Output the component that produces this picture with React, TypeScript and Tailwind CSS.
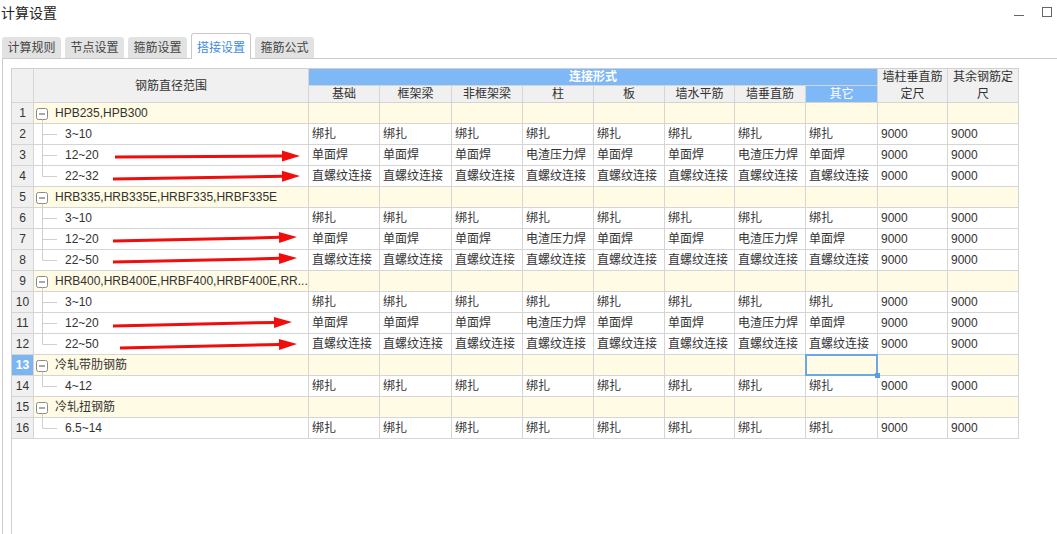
import React from 'react';

type Group = { name: string; children: string[] };

const groups: Group[] = [
  { name: 'HPB235,HPB300', children: ['3~10', '12~20', '22~32'] },
  { name: 'HRB335,HRB335E,HRBF335,HRBF335E', children: ['3~10', '12~20', '22~50'] },
  { name: 'HRB400,HRB400E,HRBF400,HRBF400E,RR...', children: ['3~10', '12~20', '22~50'] },
  { name: '冷轧带肋钢筋', children: ['4~12'] },
  { name: '冷轧扭钢筋', children: ['6.5~14'] },
];

const subHeaders = ['基础', '框架梁', '非框架梁', '柱', '板', '墙水平筋', '墙垂直筋', '其它'];

const weld = ['单面焊', '单面焊', '单面焊', '电渣压力焊', '单面焊', '单面焊', '电渣压力焊', '单面焊'];

function valuesFor(range: string) {
  if (range === '12~20') return weld;
  if (range.startsWith('22~')) return Array(8).fill('直螺纹连接');
  return Array(8).fill('绑扎');
}

const arrows = [
  [115, 157, 300, 156],
  [113, 179, 300, 176],
  [113, 241, 297, 237],
  [113, 262, 297, 258],
  [113, 326, 292, 322],
  [120, 348, 297, 344],
];

const cell = 'border-r border-b border-[#d5d5d5]';

function Tab({ label, active }: { label: string; active?: boolean }) {
  if (active) {
    return (
      <div className="relative z-10 -mb-px flex h-[26px] w-[60px] items-center justify-center rounded-t-[3px] border border-b-0 border-[#c9c9c9] bg-white pt-[3px] text-[12px] text-[#3d8be2]">
        {label}
      </div>
    );
  }
  return (
    <div className="flex h-[21px] w-[59px] items-center justify-center rounded-t-[3px] bg-[#e2e2e2] text-[12px] text-[#444]">
      {label}
    </div>
  );
}

function GroupRow({ num, name, selected }: { num: number; name: string; selected?: boolean }) {
  return (
    <>
      <div
        className={`${cell} flex items-center justify-center ${
          selected ? 'bg-[#7db5f3] font-bold text-white' : 'bg-[#f0f0f0]'
        }`}
      >
        {num}
      </div>
      <div className={`${cell} flex items-center overflow-hidden whitespace-nowrap bg-[#fffbe4]`}>
        <svg width="21" height="20" className="shrink-0">
          <rect x="2.5" y="5.5" width="11" height="11" rx="2" fill="white" stroke="#8a8a8a" />
          <line x1="5" y1="11" x2="11" y2="11" stroke="#555" />
          <line x1="8.5" y1="16.5" x2="8.5" y2="20" stroke="#cfcfcf" />
        </svg>
        <span>{name}</span>
      </div>
      {Array.from({ length: 10 }).map((_, i) => (
        <div key={i} className={`${cell} relative bg-[#fffbe4]`}>
          {selected && i === 7 && (
            <>
              <div className="absolute inset-[-1px] border-2 border-[#6aa6e8]" />
              <div className="absolute -right-[3px] -bottom-[3px] z-10 h-[5px] w-[5px] bg-[#5b9be0]" />
            </>
          )}
        </div>
      ))}
    </>
  );
}

function ChildRow({ num, range, last }: { num: number; range: string; last: boolean }) {
  const vals = valuesFor(range);
  return (
    <>
      <div className={`${cell} flex items-center justify-center bg-[#f0f0f0]`}>{num}</div>
      <div className={`${cell} flex items-center whitespace-nowrap bg-white`}>
        <svg width="31" height="20" className="shrink-0">
          <line x1="8.5" y1="0" x2="8.5" y2={last ? 10.5 : 20} stroke="#cfcfcf" />
          <line x1="8.5" y1="10.5" x2="23" y2="10.5" stroke="#cfcfcf" />
        </svg>
        <span>{range}</span>
      </div>
      {vals.map((v, i) => (
        <div key={i} className={`${cell} flex items-center whitespace-nowrap bg-white pl-[3px]`}>
          {v}
        </div>
      ))}
      <div className={`${cell} flex items-center bg-white pl-[3px]`}>9000</div>
      <div className={`${cell} flex items-center bg-white pl-[3px]`}>9000</div>
    </>
  );
}

function Arrow({ a }: { a: number[] }) {
  const [x1, y1, x2, y2] = a;
  const dx = x2 - x1;
  const dy = y2 - y1;
  const len = Math.hypot(dx, dy);
  const ux = dx / len;
  const uy = dy / len;
  const hl = 18;
  const hw = 5.5;
  const bx = x2 - ux * hl;
  const by = y2 - uy * hl;
  const p = `${x2},${y2} ${bx - uy * hw},${by + ux * hw} ${bx + uy * hw},${by - ux * hw}`;
  return (
    <g>
      <line x1={x1} y1={y1} x2={bx + ux} y2={by + uy} stroke="#f20d0d" strokeWidth="3" />
      <polygon points={p} fill="#f20d0d" />
    </g>
  );
}

export default function App() {
  let n = 0;
  const rows: React.ReactNode[] = [];
  groups.forEach((g, gi) => {
    n += 1;
    rows.push(<GroupRow key={`g${gi}`} num={n} name={g.name} selected={n === 13} />);
    g.children.forEach((c, ci) => {
      n += 1;
      rows.push(
        <ChildRow key={`c${gi}-${ci}`} num={n} range={c} last={ci === g.children.length - 1} />
      );
    });
  });

  return (
    <div className="relative flex h-[534px] w-[1057px] flex-col overflow-hidden bg-white font-['Liberation_Sans','Noto_Sans_CJK_SC',sans-serif] text-[12px] text-[#333]">
      <div className="flex h-[33px] shrink-0 items-start justify-between">
        <div className="pl-[1px] pt-[3px] text-[14px] leading-[20px] text-[#222]">计算设置</div>
        <div className="flex items-start gap-[18px] pr-[5px] pt-[7px]">
          <div className="mt-[8px] h-px w-[10px] bg-[#666]" />
          <div className="h-[10px] w-[10px] border border-[#666]" />
        </div>
      </div>

      <div className="flex h-[25px] shrink-0 items-end gap-[4px] pl-[2px]">
        <Tab label="计算规则" />
        <Tab label="节点设置" />
        <Tab label="箍筋设置" />
        <Tab label="搭接设置" active />
        <Tab label="箍筋公式" />
      </div>

      <div className="ml-[2px] flex-1 border-l border-t border-[#cbcbcb] pl-[8px] pt-[9px]">
        <div className="h-full border-l border-[#d0d0d0]">
          <div className="grid w-fit grid-cols-[22px_275px_71px_72px_71px_71px_71px_70px_71px_72px_70px_71px] grid-rows-[17px_17px_repeat(16,21px)] border-t border-[#d0d0d0]">
            <div className={`${cell} row-span-2 bg-[#f0f0f0]`} />
            <div className={`${cell} row-span-2 flex items-center justify-center bg-[#f0f0f0]`}>
              钢筋直径范围
            </div>
            <div className={`${cell} col-span-8 flex items-center justify-center bg-[#7fb8f6] font-bold text-white`}>
              连接形式
            </div>
            <div className={`${cell} row-span-2 flex items-center justify-center bg-[#f0f0f0] text-center leading-[17px]`}>
              墙柱垂直筋
              <br />
              定尺
            </div>
            <div className={`${cell} row-span-2 flex items-center justify-center bg-[#f0f0f0] text-center leading-[17px]`}>
              其余钢筋定
              <br />
              尺
            </div>
            {subHeaders.map((h) => (
              <div
                key={h}
                className={`${cell} flex items-center justify-center ${
                  h === '其它' ? 'bg-[#7fb8f6] text-white' : 'bg-[#f0f0f0]'
                }`}
              >
                {h}
              </div>
            ))}
            {rows}
          </div>
        </div>
      </div>

      <svg className="pointer-events-none absolute inset-0" width="1057" height="534" viewBox="0 0 1057 534">
        {arrows.map((a, i) => (
          <Arrow key={i} a={a} />
        ))}
      </svg>
    </div>
  );
}
